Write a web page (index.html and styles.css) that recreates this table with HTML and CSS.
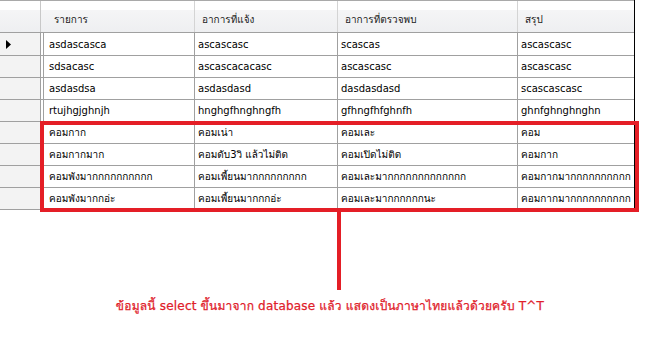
FILE: index.html
```html
<!DOCTYPE html>
<html lang="th">
<head>
<meta charset="utf-8">
<title>DataGridView</title>
<link rel="stylesheet" href="styles.css">
</head>
<body>
<div class="page">
  <div class="grid">
    <div class="row head">
      <div class="rh"></div>
      <div class="cell c1">รายการ</div>
      <div class="cell c2">อาการที่แจ้ง</div>
      <div class="cell c3">อาการที่ตรวจพบ</div>
      <div class="cell c4">สรุป</div>
    </div>
    <div class="row first">
      <div class="rh"><svg class="arrow" width="6" height="9" viewBox="0 0 6 9"><polygon points="0,0 5,4.5 0,9" fill="#000"/></svg></div>
      <div class="cell c1">asdascasca</div>
      <div class="cell c2">ascascasc</div>
      <div class="cell c3">scascas</div>
      <div class="cell c4">ascascasc</div>
    </div>
    <div class="row">
      <div class="rh"></div>
      <div class="cell c1">sdsacasc</div>
      <div class="cell c2">ascascacacasc</div>
      <div class="cell c3">ascascasc</div>
      <div class="cell c4">ascascasc</div>
    </div>
    <div class="row">
      <div class="rh"></div>
      <div class="cell c1">asdasdsa</div>
      <div class="cell c2">asdasdasd</div>
      <div class="cell c3">dasdasdasd</div>
      <div class="cell c4">scascascasc</div>
    </div>
    <div class="row">
      <div class="rh"></div>
      <div class="cell c1">rtujhgjghnjh</div>
      <div class="cell c2">hnghgfhnghngfh</div>
      <div class="cell c3">gfhngfhfghnfh</div>
      <div class="cell c4">ghnfghnghnghn</div>
    </div>
    <div class="row">
      <div class="rh"></div>
      <div class="cell c1">คอมกาก</div>
      <div class="cell c2">คอมเน่า</div>
      <div class="cell c3">คอมเละ</div>
      <div class="cell c4">คอม</div>
    </div>
    <div class="row">
      <div class="rh"></div>
      <div class="cell c1">คอมกากมาก</div>
      <div class="cell c2">คอมดับ3วิ แล้วไม่ติด</div>
      <div class="cell c3">คอมเปิดไม่ติด</div>
      <div class="cell c4">คอมกาก</div>
    </div>
    <div class="row">
      <div class="rh"></div>
      <div class="cell c1">คอมพังมากกกกกกกกกก</div>
      <div class="cell c2">คอมเพี้ยนมากกกกกกกกก</div>
      <div class="cell c3">คอมเละมากกกกกกกกกกกกก</div>
      <div class="cell c4">คอมกากมากกกกกกกกกก</div>
    </div>
    <div class="row">
      <div class="rh"></div>
      <div class="cell c1">คอมพังมากกอ่ะ</div>
      <div class="cell c2">คอมเพี้ยนมากกกอ่ะ</div>
      <div class="cell c3">คอมเละมากกกกกกนะ</div>
      <div class="cell c4">คอมกากมากกกกกกกกกก</div>
    </div>
  </div>
  <p class="note">ข้อมูลนี้ select ขึ้นมาจาก database แล้ว แสดงเป็นภาษาไทยแล้วด้วยครับ T^T</p>
  <div class="callout"></div>
  <div class="stem"></div>
</div>
</body>
</html>
```

FILE: styles.css
```css
html, body {
  margin: 0;
  padding: 0;
  background: #fff;
}

.page {
  position: relative;
  width: 660px;
  height: 339px;
  overflow: hidden;
  font-family: "DejaVu Sans", "Loma", "Garuda", "Noto Sans Thai Looped", "Noto Sans Thai", "Noto Sans", sans-serif;
  font-size: 10px;
  color: #000;
}

.grid {
  width: 634px;
  border-right: 1px solid #000;
}

.row {
  display: flex;
  height: 22px;
  box-sizing: border-box;
  border-bottom: 1px solid #a0a0a0;
}

.row.first {
  height: 23px;
}

.row.head {
  height: 33px;
  border-top: 1px solid #a9a9a9;
  background: linear-gradient(#ffffff 0, #ffffff 28%, #f5f5f6 30%, #eeeff1 100%);
  border-bottom: 1px solid #a0a0a0;
}

.rh {
  width: 41px;
  flex: none;
  box-sizing: border-box;
  border-right: 1px solid #a0a0a0;
  background: #f3f3f3;
  display: flex;
  align-items: center;
  padding-left: 6px;
}

.head .rh {
  background: transparent;
  border-right-color: #c8c8c8;
}

.cell {
  box-sizing: border-box;
  flex: none;
  border-right: 1px solid #a0a0a0;
  display: flex;
  align-items: center;
  padding-left: 3px;
  white-space: nowrap;
  overflow: hidden;
}

.c1 {
  width: 152px;
  margin-left: 2px;
  border-left: 1px solid #a0a0a0;
  padding-left: 5px;
}
.c2 { width: 143px; }
.c3 { width: 180px; }
.c4 { width: 116px; border-right: none; }

.head .cell {
  border-right-color: #d4d4d4;
  padding-left: 7px;
  padding-top: 6px;
  color: #1a1a1a;
}

.head .c1 {
  margin-left: 0;
  width: 154px;
  border-left: none;
  padding-left: 13px;
}

.note {
  margin: 0;
  padding-top: 88px;
  text-align: center;
  color: #e0202a;
  font-family: "DejaVu Sans", "Loma", "Garuda", "Noto Sans Thai Looped", "Noto Sans Thai", sans-serif;
  font-weight: normal;
  font-size: 12px;
  line-height: 16px;
  letter-spacing: 0.2px;
  -webkit-text-stroke: 0.25px #e0202a;
}

.callout {
  position: absolute;
  left: 40px;
  top: 121px;
  width: 599px;
  height: 91px;
  box-sizing: border-box;
  border: 4px solid #e41e26;
}

.stem {
  position: absolute;
  left: 337px;
  top: 211px;
  width: 4px;
  height: 79px;
  background: #e41e26;
}
```
